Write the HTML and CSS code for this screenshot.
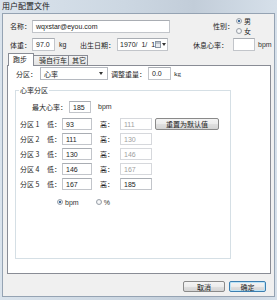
FILE: index.html
```html
<!DOCTYPE html>
<html>
<head>
<meta charset="utf-8">
<link rel="stylesheet" href="styles.css">
</head>
<body>
<div class="window">
  <div class="titlebar">用户配置文件</div>
  <div class="client">
    <div class="row row1">
      <span class="lbl w22">名称：</span>
      <span class="field w138">wqxstar@eyou.com</span>
      <span class="lbl gender-lbl">性别：</span>
      <div class="radios">
        <div class="radio-item"><span class="radio on"></span>男</div>
        <div class="radio-item"><span class="radio"></span>女</div>
      </div>
    </div>
    <div class="row row2">
      <span class="lbl w22">体重：</span>
      <span class="field w23">97.0</span>
      <span class="lbl unit-kg">kg</span>
      <span class="lbl w37">出生日期：</span>
      <span class="field date">1970/&nbsp;&nbsp;1/&nbsp;&nbsp;1
        <span class="cal"><svg width="6" height="7" viewBox="0 0 6 7"><rect x="0.5" y="0.5" width="5" height="6" fill="#e8eaee" stroke="#8c96a3"/><line x1="1" y1="2" x2="5" y2="2" stroke="#8c96a3"/></svg><span class="tri"></span></span>
      </span>
      <span class="lbl rest-lbl">休息心率：</span>
      <span class="field w22"></span>
      <span class="lbl unit-bpm">bpm</span>
    </div>
    <div class="tabs">
      <div class="tab active">跑步</div>
      <div class="tab t2">骑自行车</div>
      <div class="tab t3">其它</div>
    </div>
    <div class="panel">
      <div class="prow">
        <span class="lbl w24">分区：</span>
        <span class="select">心率<span class="tri"></span></span>
        <span class="lbl adj-lbl">调整重量：</span>
        <span class="field w23">0.0</span>
        <span class="lbl unit-adj">kg</span>
      </div>
      <div class="group">
        <div class="legend">心率分区</div>
        <div class="grow maxrow">
          <span class="lbl w37">最大心率：</span>
          <span class="field w22">185</span>
          <span class="lbl unit-max">bpm</span>
        </div>
        <div class="grow zone first">
          <span class="lbl zname">分区 1</span><span class="lbl w15">低：</span><span class="field w30">93</span>
          <span class="lbl hi">高：</span><span class="field w32 dis">111</span>
          <span class="btn reset">重置为默认值</span>
        </div>
        <div class="grow zone">
          <span class="lbl zname">分区 2</span><span class="lbl w15">低：</span><span class="field w30">111</span>
          <span class="lbl hi">高：</span><span class="field w32 dis">130</span>
        </div>
        <div class="grow zone">
          <span class="lbl zname">分区 3</span><span class="lbl w15">低：</span><span class="field w30">130</span>
          <span class="lbl hi">高：</span><span class="field w32 dis">146</span>
        </div>
        <div class="grow zone">
          <span class="lbl zname">分区 4</span><span class="lbl w15">低：</span><span class="field w30">146</span>
          <span class="lbl hi">高：</span><span class="field w32 dis">167</span>
        </div>
        <div class="grow zone">
          <span class="lbl zname">分区 5</span><span class="lbl w15">低：</span><span class="field w30">167</span>
          <span class="lbl hi">高：</span><span class="field w32">185</span>
        </div>
        <div class="grow unitrow">
          <span class="radio-item inl"><span class="radio on"></span>bpm</span>
          <span class="radio-item inl pct"><span class="radio"></span>%</span>
        </div>
      </div>
    </div>
    <div class="buttons">
      <span class="btn cancel">取消</span>
      <span class="btn ok">确定</span>
    </div>
  </div>
</div>
</body>
</html>
```

FILE: styles.css
```css
* { box-sizing: border-box; }
html, body { margin: 0; padding: 0; }
body {
  width: 277px;
  height: 300px;
  overflow: hidden;
  font-family: "Liberation Sans", "Noto Sans CJK SC", sans-serif;
  font-size: 7px;
  color: #1e1e1e;
}
.window {
  width: 277px;
  height: 300px;
  background: linear-gradient(90deg, #dae3ec 0%, #ccd7e2 45%, #c2cdd9 70%, #d6e0ea 100%);
}
.titlebar {
  height: 13px;
  padding-left: 2px;
  font-family: "Noto Sans CJK SC", sans-serif;
  font-size: 8px;
  line-height: 11px;
  color: #1a1a1a;
}
.client {
  margin: 0 2px 0 2px;
  height: 284px;
  border: 1px solid #95a3b3;
  background: #f0f0f0;
  padding-left: 7px;
}
.row { display: flex; align-items: center; }
.row1 { height: 20px; margin-top: 2px; }
.row2 { height: 13px; margin-top: 2px; }
.lbl {
  flex: none;
  font-family: "Noto Sans CJK SC", sans-serif;
  font-size: 7px;
  line-height: 10px;
  white-space: nowrap;
}
.w15 { width: 15px; }
.w22 { width: 22px; }
.w23 { width: 23px; }
.w24 { width: 24px; }
.w30 { width: 30px; }
.w32 { width: 32px; }
.w37 { width: 37px; }
.w138 { width: 138px; }
.field {
  flex: none;
  display: flex;
  align-items: center;
  height: 13px;
  border: 1px solid #c2c5ca;
  border-top-color: #a9adb3;
  background: #fff;
  padding-left: 3px;
  font-family: "Liberation Sans", sans-serif;
  font-size: 7px;
  color: #222;
}
.grow .field { height: 12px; }
.field.dis { color: #a0a0a0; border-color: #d6d8dc; }
.gender-lbl { margin-left: 43px; width: 23px; }
.radios { display: flex; flex-direction: column; }
.radio-item {
  display: flex;
  align-items: center;
  height: 10px;
  font-family: "Noto Sans CJK SC", sans-serif;
  font-size: 7px;
}
.radio {
  width: 6px;
  height: 6px;
  border-radius: 50%;
  border: 1px solid #9aa1a9;
  background: radial-gradient(circle, #fff 0%, #e3e6ea 100%);
  margin-right: 2px;
  flex: none;
}
.radio.on {
  background: radial-gradient(circle, #2a4f7a 0%, #4a78a8 35%, #dfe6ee 45%, #f4f6f8 100%);
}
.unit-kg { margin-left: 4px; width: 21px; font-family: "Liberation Sans", sans-serif; }
.date { width: 51px; padding-left: 2px; }
.cal {
  margin-left: auto;
  margin-right: 2px;
  display: flex;
  align-items: center;
  gap: 1px;
}
.tri {
  display: inline-block;
  width: 0;
  height: 0;
  border-left: 2px solid transparent;
  border-right: 2px solid transparent;
  border-top: 3px solid #333;
}
.rest-lbl { margin-left: 25px; width: 40px; }
.unit-bpm { margin-left: 3px; font-family: "Liberation Sans", sans-serif; color: #333; }
.tabs {
  display: flex;
  align-items: flex-end;
  height: 12px;
  margin-top: 2px;
  margin-left: -2px;
  position: relative;
  z-index: 1;
}
.tab {
  flex: none;
  height: 10px;
  font-family: "Noto Sans CJK SC", sans-serif;
  font-size: 7px;
  line-height: 9px;
  padding-left: 4px;
  border: 1px solid #898c95;
  border-bottom: none;
  background: linear-gradient(#f3f3f3, #e3e3e3);
}
.tab.active {
  width: 26px;
  height: 13px;
  margin-bottom: -1px;
  background: #fff;
  line-height: 11px;
  padding-left: 4px;
}
.t2 { width: 35px; border-left: none; padding-left: 5px; }
.t3 { width: 19px; border-left: none; padding-left: 3px; }
.panel {
  margin-left: -3px;
  width: 264px;
  height: 209px;
  border: 1px solid #898c95;
  background: #fff;
}
.prow {
  display: flex;
  align-items: center;
  height: 13px;
  margin-top: 1px;
  padding-left: 8px;
}
.select {
  flex: none;
  display: flex;
  align-items: center;
  width: 68px;
  height: 13px;
  border: 1px solid #b5b9c0;
  background: #fff;
  padding: 0 4px 0 3px;
  font-family: "Noto Sans CJK SC", sans-serif;
  font-size: 7px;
}
.select .tri { margin-left: auto; }
.adj-lbl { margin-left: 3px; width: 37px; }
.unit-adj { margin-left: 3px; font-family: "Liberation Serif", serif; }
.group {
  margin: 10px 0 0 7px;
  width: 216px;
  height: 169px;
  border: 1px solid #d5dfe5;
}
.legend {
  display: table;
  margin: -5px 0 0 3px;
  padding: 0 1px;
  background: #fff;
  font-family: "Noto Sans CJK SC", sans-serif;
  font-size: 7px;
  line-height: 9px;
}
.grow { display: flex; align-items: center; height: 12px; }
.maxrow { margin-top: 6px; padding-left: 16px; }
.unit-max { margin-left: 7px; font-family: "Liberation Sans", sans-serif; color: #333; }
.zone { margin-top: 3px; padding-left: 4px; }
.zone.first { margin-top: 5px; }
.zname { width: 27px; }
.hi { margin-left: 8px; width: 20px; }
.btn {
  flex: none;
  display: flex;
  align-items: center;
  justify-content: center;
  border: 1px solid #8a8a8a;
  border-radius: 2px;
  background: linear-gradient(#f4f4f4 0%, #ececec 50%, #e0e0e0 51%, #d4d4d4 100%);
  font-family: "Noto Sans CJK SC", sans-serif;
  font-size: 7px;
  color: #1a1a1a;
}
.reset { margin-left: 3px; width: 64px; height: 12px; }
.unitrow { margin-top: 7px; padding-left: 41px; height: 10px; }
.inl { font-family: "Liberation Sans", sans-serif; color: #333; }
.pct { margin-left: 17px; }
.buttons {
  display: flex;
  justify-content: flex-end;
  gap: 4px;
  margin-top: 7px;
  padding-right: 8px;
}
.cancel { width: 42px; height: 11px; }
.ok {
  width: 37px;
  height: 11px;
  border-color: #3c7fb1;
  box-shadow: inset 0 0 0 1px #bde4f7;
}
```
